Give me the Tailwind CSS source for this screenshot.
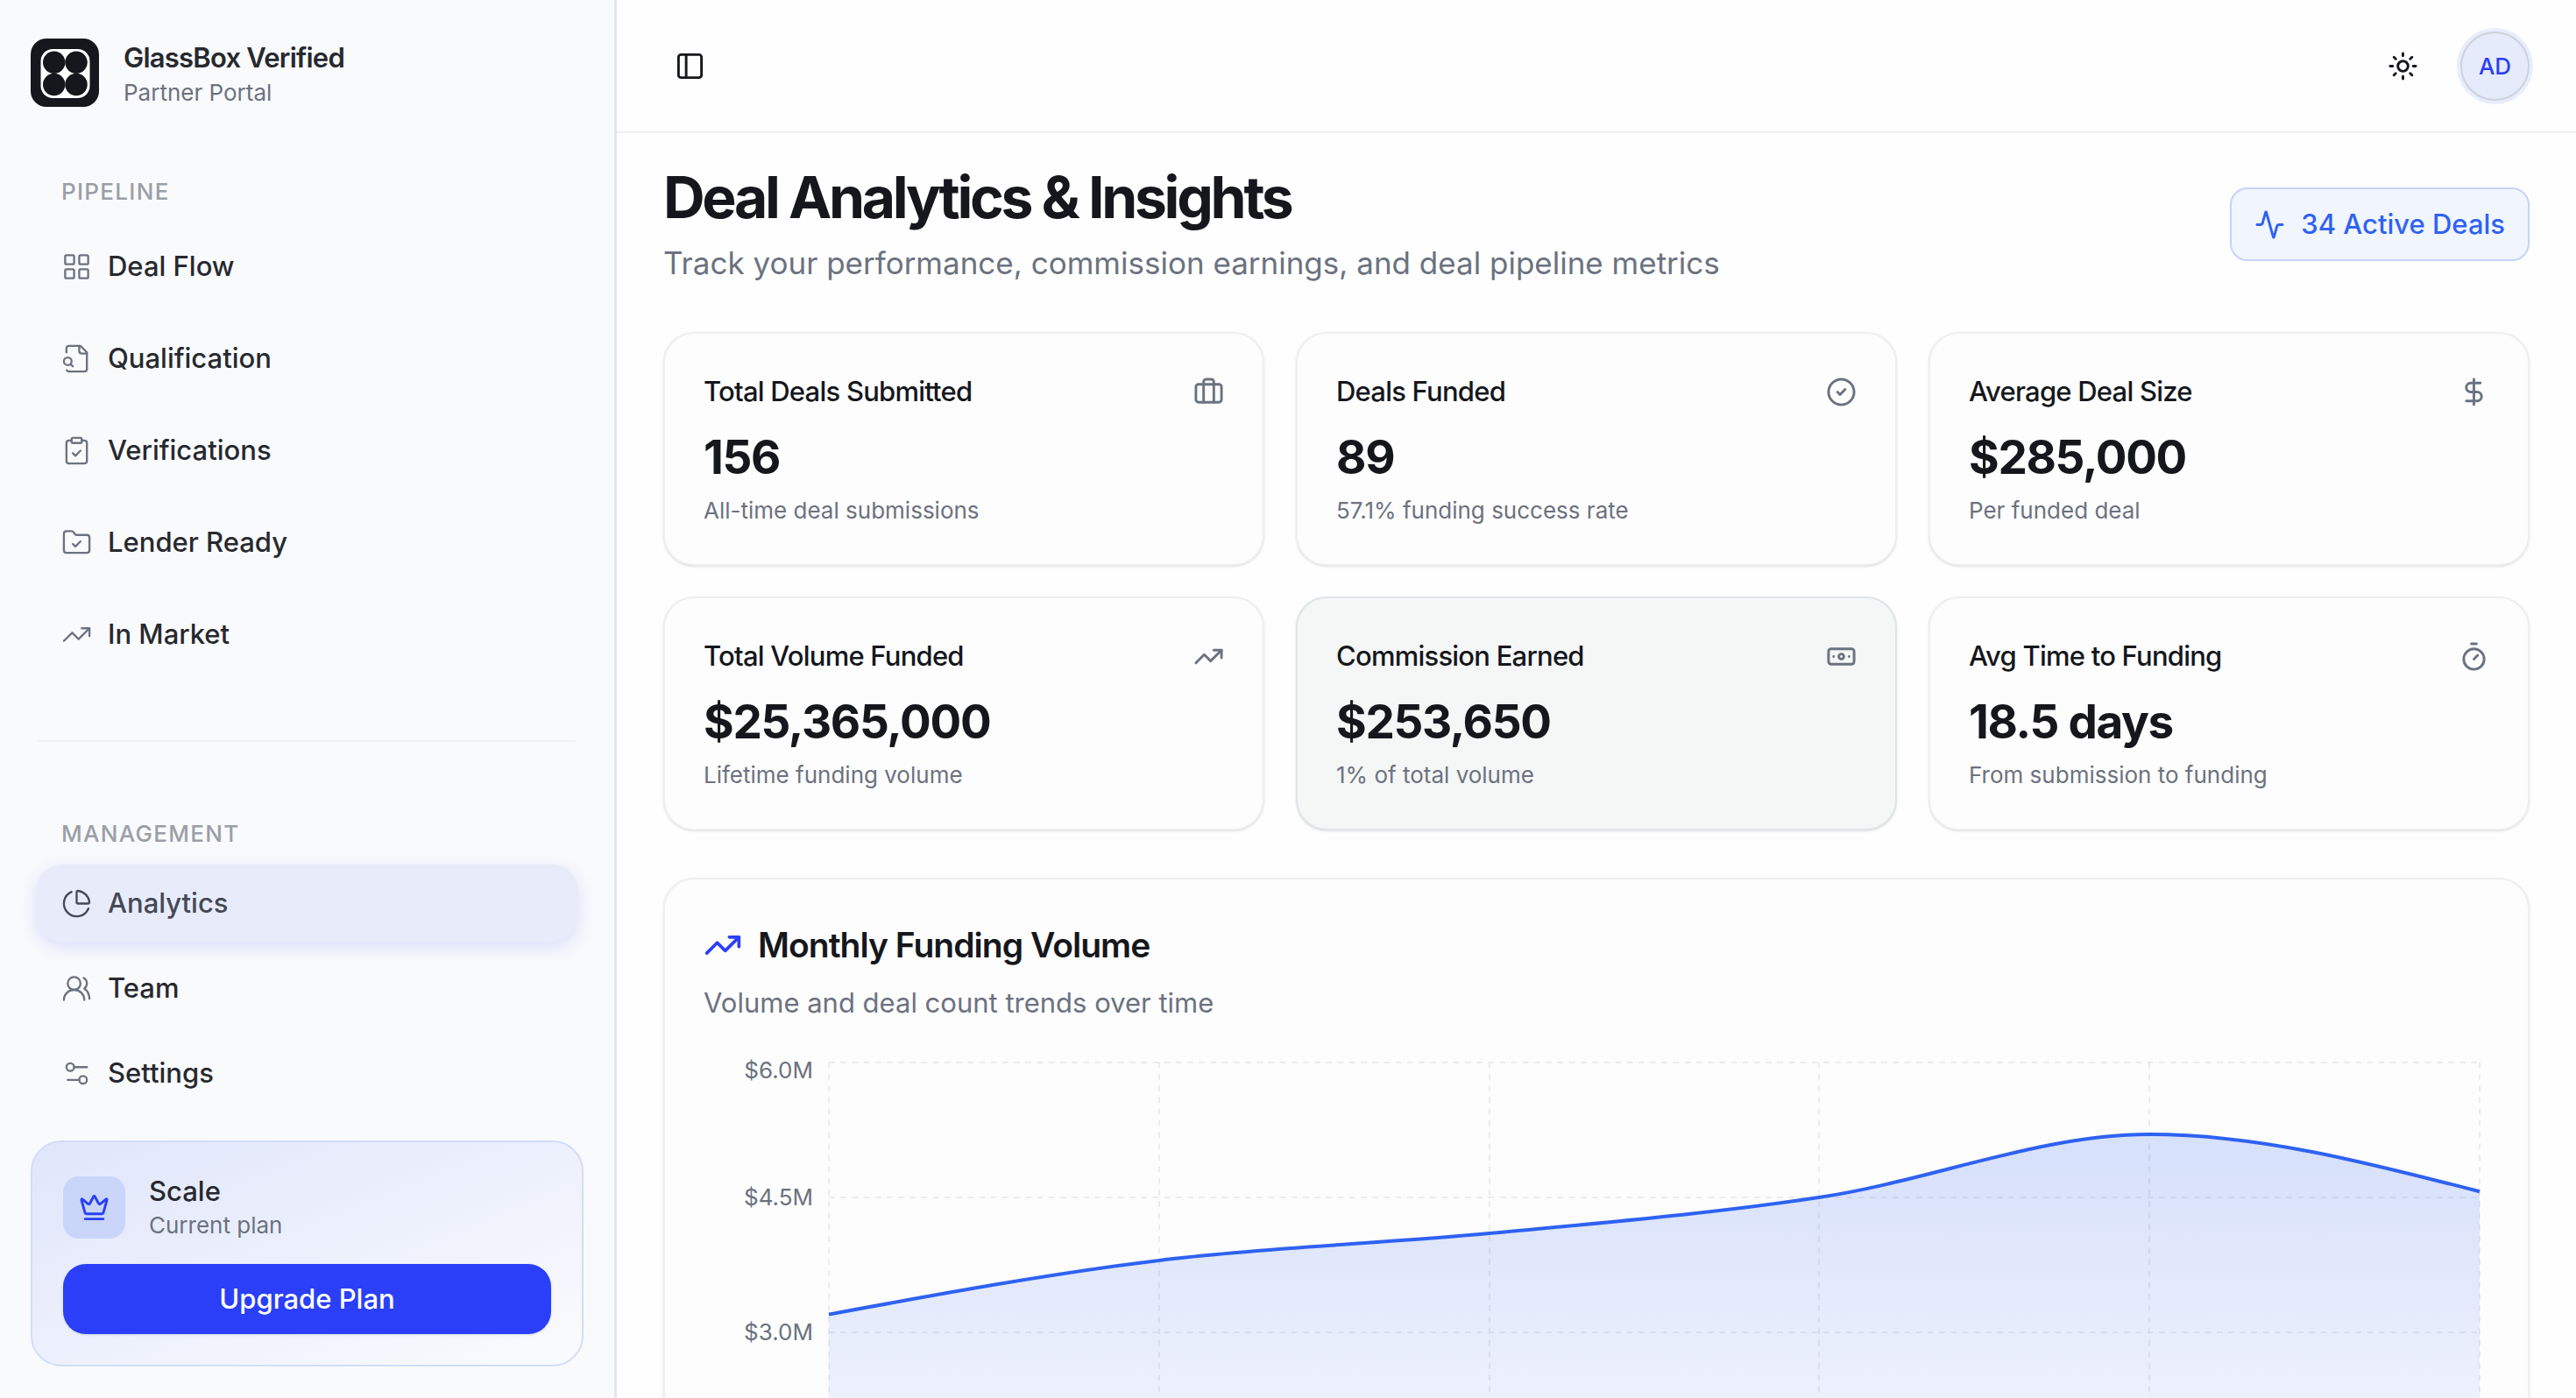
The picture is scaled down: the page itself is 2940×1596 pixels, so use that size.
<!DOCTYPE html>
<html lang="en">
<head>
    <meta charset="UTF-8">
    <meta name="viewport" content="width=device-width, initial-scale=1.0">
    <title>Deal Analytics - GlassBox Verified</title>
    <script src="https://cdn.jsdelivr.net/npm/@tailwindcss/browser@4"></script>
</head>
<body class="bg-[#fefefe] font-[Inter,sans-serif] text-[#15171c] antialiased">
    <!-- icons -->
    <svg class="hidden" aria-hidden="true">
        <symbol id="trending" viewBox="0 0 24 24"><path d="m22 7-8.500 8.500-5-5L2 17"/><path d="M16 7h6v6"/></symbol>
    </svg>

    <div class="flex h-screen overflow-hidden">
    <!-- sidebar -->
    <aside class="flex w-[704px] shrink-0 flex-col border-r-3 border-[#e2e5ea] bg-[#f9fafc] px-[35px] pb-9 text-[31px] leading-[44px] text-[#27292f]">
        <div class="flex h-[122px] items-center gap-7 pt-11">
            <svg class="size-[78px]" viewBox="0 0 78 78">
                <rect width="78" height="78" rx="18" fill="#15171c"/>
                <rect x="11.500" y="12" width="56" height="56" rx="14" fill="#fff"/>
                <g fill="#15171c"><circle cx="26.700" cy="27.300" r="12.700"/><circle cx="52" cy="27.300" r="12.700"/><circle cx="26.700" cy="52.500" r="12.700"/><circle cx="52" cy="52.500" r="12.700"/></g>
            </svg>
            <div class="pt-1">
                <p class="font-semibold leading-[42px] tracking-tight">GlassBox Verified</p>
                <p class="text-[26px] leading-[38px] text-[#6b7280]">Partner Portal</p>
            </div>
        </div>

        <nav class="mt-[70px]">
            <h2 class="px-[35px] text-[26px] leading-[54px] font-medium tracking-wider text-[#9a9fa7]">PIPELINE</h2>
            <ul class="mt-[14px] flex flex-col gap-[17px] px-[6px]">
                <li><a href="#" class="flex h-[88px] items-center gap-[18px] px-[29px] font-medium">
                    <svg class="size-[35px] fill-none stroke-[#6b7280] stroke-[1.6]" stroke-linecap="round" stroke-linejoin="round" viewBox="0 0 24 24"><rect x="3" y="3" width="7" height="7" rx="1"/><rect x="14" y="3" width="7" height="7" rx="1"/><rect x="14" y="14" width="7" height="7" rx="1"/><rect x="3" y="14" width="7" height="7" rx="1"/></svg>
                    Deal Flow</a></li>
                <li><a href="#" class="flex h-[88px] items-center gap-[18px] px-[29px] font-medium">
                    <svg class="size-[35px] fill-none stroke-[#6b7280] stroke-[1.6]" stroke-linecap="round" stroke-linejoin="round" viewBox="0 0 24 24"><path d="M14 2v4a2 2 0 0 0 2 2h4"/><path d="M4.268 21a2 2 0 0 0 1.727 1H18a2 2 0 0 0 2-2V7l-5-5H6a2 2 0 0 0-2 2v3"/><path d="m9 18-1.500-1.500"/><circle cx="5" cy="14" r="3"/></svg>
                    Qualification</a></li>
                <li><a href="#" class="flex h-[88px] items-center gap-[18px] px-[29px] font-medium">
                    <svg class="size-[35px] fill-none stroke-[#6b7280] stroke-[1.6]" stroke-linecap="round" stroke-linejoin="round" viewBox="0 0 24 24"><rect x="8" y="2" width="8" height="4" rx="1"/><path d="M16 4h2a2 2 0 0 1 2 2v14a2 2 0 0 1-2 2H6a2 2 0 0 1-2-2V6a2 2 0 0 1 2-2h2"/><path d="m9 14 2 2 4-4"/></svg>
                    Verifications</a></li>
                <li><a href="#" class="flex h-[88px] items-center gap-[18px] px-[29px] font-medium">
                    <svg class="size-[35px] fill-none stroke-[#6b7280] stroke-[1.6]" stroke-linecap="round" stroke-linejoin="round" viewBox="0 0 24 24"><path d="M20 20a2 2 0 0 0 2-2V8a2 2 0 0 0-2-2h-7.900a2 2 0 0 1-1.690-.9L9.600 3.900A2 2 0 0 0 7.930 3H4a2 2 0 0 0-2 2v13a2 2 0 0 0 2 2Z"/><path d="m9 13 2 2 4-4"/></svg>
                    Lender Ready</a></li>
                <li><a href="#" class="flex h-[88px] items-center gap-[18px] px-[29px] font-medium">
                    <svg class="size-[35px] fill-none stroke-[#6b7280] stroke-[1.6]" stroke-linecap="round" stroke-linejoin="round"><use href="#trending"/></svg>
                    In Market</a></li>
            </ul>
        </nav>

        <hr class="mx-[9px] mt-[77px] border-t-2 border-[#f0f1f3]">

        <nav class="mt-[78px]">
            <h2 class="px-[35px] text-[26px] leading-[54px] font-medium tracking-wider text-[#9a9fa7]">MANAGEMENT</h2>
            <ul class="mt-2 flex flex-col gap-[9px] px-[6px]">
                <li><a href="#" aria-current="page" class="flex h-[88px] items-center gap-[18px] rounded-[30px] bg-[#e8ecfa] px-[29px] font-medium text-[#454956] shadow-[0_6px_20px_#2a3ff726]">
                    <svg class="size-[35px] fill-none stroke-[#454956] stroke-[1.6]" stroke-linecap="round" stroke-linejoin="round" viewBox="0 0 24 24"><path d="M21 12c.552 0 1.005-.449.95-.998a10 10 0 0 0-8.953-8.951c-.55-.055-.998.398-.998.95v8a1 1 0 0 0 1 1z"/><path d="M21.210 15.890A10 10 0 1 1 8 2.830"/></svg>
                    Analytics</a></li>
                <li><a href="#" class="flex h-[88px] items-center gap-[18px] px-[29px] font-medium">
                    <svg class="size-[35px] fill-none stroke-[#6b7280] stroke-[1.6]" stroke-linecap="round" stroke-linejoin="round" viewBox="0 0 24 24"><path d="M18 21a8 8 0 0 0-16 0"/><circle cx="10" cy="8" r="5"/><path d="M22 20c0-3.370-2-6.500-4-8a5 5 0 0 0-.45-8.300"/></svg>
                    Team</a></li>
                <li><a href="#" class="flex h-[88px] items-center gap-[18px] px-[29px] font-medium">
                    <svg class="size-[35px] fill-none stroke-[#6b7280] stroke-[1.6]" stroke-linecap="round" stroke-linejoin="round" viewBox="0 0 24 24"><path d="M20 7H10"/><path d="M14 17H5"/><circle cx="17" cy="17" r="3"/><circle cx="7" cy="7" r="3"/></svg>
                    Settings</a></li>
            </ul>
        </nav>

        <!-- plan -->
        <div class="mt-auto rounded-[35px] border-2 border-[#d3dcfa] bg-linear-to-br from-[#e0e6fb] to-[#fafbfd] px-[35px] pt-[35px] pb-[35px]">
            <div class="flex items-center gap-[27px]">
                <div class="flex size-[71px] items-center justify-center rounded-[18px] bg-[#c9d6fa]">
                    <svg class="size-[35px] fill-none stroke-[#2a3ff7] stroke-2" stroke-linecap="round" stroke-linejoin="round" viewBox="0 0 24 24"><path d="M11.562 3.266a.5.5 0 0 1 .876 0L15.390 8.870a1 1 0 0 0 1.516.294L21.183 5.500a.5.5 0 0 1 .798.519l-2.834 10.246a1 1 0 0 1-.956.734H5.810a1 1 0 0 1-.957-.734L2.020 6.020a.5.5 0 0 1 .798-.519l4.276 3.664a1 1 0 0 0 1.516-.294z"/><path d="M5 21h14"/></svg>
                </div>
                <div>
                    <p class="leading-[42px] font-medium">Scale</p>
                    <p class="text-[26px] leading-9 text-[#6b7280]">Current plan</p>
                </div>
            </div>
            <button type="button" class="mt-[26px] h-20 w-full rounded-[26px] bg-[#2a3ff7] font-medium text-white shadow-sm">Upgrade Plan</button>
        </div>
    </aside>

    <div class="min-w-0 flex-1">
        <!-- header -->
        <header class="flex h-[152px] items-center justify-between border-b-2 border-[#f0f0f1] px-[53px]">
            <button type="button" aria-label="Toggle sidebar" class="ml-[-5px] flex size-[70px] items-center justify-center">
                <svg class="size-[35px] fill-none stroke-current stroke-2" stroke-linecap="round" stroke-linejoin="round" viewBox="0 0 24 24"><rect x="3" y="3" width="18" height="18" rx="2"/><path d="M9 3v18"/></svg>
            </button>
            <div class="flex items-center gap-[31px]">
                <button type="button" aria-label="Toggle theme" class="flex size-[70px] items-center justify-center">
                    <svg class="size-[35px] fill-none stroke-current stroke-2" stroke-linecap="round" stroke-linejoin="round" viewBox="0 0 24 24"><circle cx="12" cy="12" r="4"/><path d="M12 2v2M12 20v2M4.930 4.930l1.410 1.410M17.660 17.660l1.410 1.410M2 12h2M20 12h2M6.340 17.660l-1.410 1.410M19.070 4.930l-1.410 1.410"/></svg>
                </button>
                <button type="button" class="size-[79px] rounded-full border-2 border-[#cfd2db] bg-[#e6ebfc] text-[26px] font-medium text-[#2a3ff7] ring-4 ring-[#e8edfc]">AD</button>
            </div>
        </header>

        <main class="px-[53px]">
            <div class="flex items-start justify-between pt-[34px]">
                <div>
                    <h1 class="text-[66px] leading-[79px] font-bold tracking-tighter">Deal Analytics &amp; Insights</h1>
                    <p class="mt-[9px] text-[35px] leading-[53px] text-[#6b7280]">Track your performance, commission earnings, and deal pipeline metrics</p>
                </div>
                <div class="mt-7 flex h-[84px] items-center gap-[18px] rounded-[20px] border-2 border-[#c5d3fb] bg-[#f1f5fe] px-[26px] text-[31px] font-medium text-[#2f62f2]">
                    <svg class="size-[35px] fill-none stroke-current stroke-2" stroke-linecap="round" stroke-linejoin="round" viewBox="0 0 24 24"><path d="M22 12h-2.480a2 2 0 0 0-1.930 1.460l-2.350 8.360a.25.25 0 0 1-.48 0L9.240 2.180a.25.25 0 0 0-.48 0l-2.350 8.360A2 2 0 0 1 4.490 12H2"/></svg>
                    34 Active Deals
                </div>
            </div>

            <!-- stats -->
            <div class="mt-[52px] grid grid-cols-3 gap-x-9 gap-y-[35px]">
                <section class="rounded-[35px] border-2 border-[#eeefef] bg-[#fdfdfd] p-11 shadow-sm">
                    <div class="flex h-11 items-center justify-between">
                        <h3 class="text-[31px] font-medium tracking-tight">Total Deals Submitted</h3>
                        <svg class="size-[35px] fill-none stroke-[#6b7280] stroke-2" stroke-linecap="round" stroke-linejoin="round" viewBox="0 0 24 24"><path d="M16 20V4a2 2 0 0 0-2-2h-4a2 2 0 0 0-2 2v16"/><rect x="2" y="6" width="20" height="14" rx="2"/></svg>
                    </div>
                    <p class="mt-[18px] text-[53px] leading-[70px] font-bold tracking-tight">156</p>
                    <p class="mt-[9px] text-[26px] leading-[34px] text-[#6b7280]">All-time deal submissions</p>
                </section>
                <section class="rounded-[35px] border-2 border-[#eeefef] bg-[#fdfdfd] p-11 shadow-sm">
                    <div class="flex h-11 items-center justify-between">
                        <h3 class="text-[31px] font-medium tracking-tight">Deals Funded</h3>
                        <svg class="size-[35px] fill-none stroke-[#6b7280] stroke-2" stroke-linecap="round" stroke-linejoin="round" viewBox="0 0 24 24"><circle cx="12" cy="12" r="10"/><path d="m9 12 2 2 4-4"/></svg>
                    </div>
                    <p class="mt-[18px] text-[53px] leading-[70px] font-bold tracking-tight">89</p>
                    <p class="mt-[9px] text-[26px] leading-[34px] text-[#6b7280]">57.1% funding success rate</p>
                </section>
                <section class="rounded-[35px] border-2 border-[#eeefef] bg-[#fdfdfd] p-11 shadow-sm">
                    <div class="flex h-11 items-center justify-between">
                        <h3 class="text-[31px] font-medium tracking-tight">Average Deal Size</h3>
                        <svg class="size-[35px] fill-none stroke-[#6b7280] stroke-2" stroke-linecap="round" stroke-linejoin="round" viewBox="0 0 24 24"><path d="M12 2v20"/><path d="M17 5H9.500a3.500 3.500 0 0 0 0 7h5a3.500 3.500 0 0 1 0 7H6"/></svg>
                    </div>
                    <p class="mt-[18px] text-[53px] leading-[70px] font-bold tracking-tight">$285,000</p>
                    <p class="mt-[9px] text-[26px] leading-[34px] text-[#6b7280]">Per funded deal</p>
                </section>
                <section class="rounded-[35px] border-2 border-[#eeefef] bg-[#fdfdfd] p-11 shadow-sm">
                    <div class="flex h-11 items-center justify-between">
                        <h3 class="text-[31px] font-medium tracking-tight">Total Volume Funded</h3>
                        <svg class="size-[35px] fill-none stroke-[#6b7280] stroke-2" stroke-linecap="round" stroke-linejoin="round"><use href="#trending"/></svg>
                    </div>
                    <p class="mt-[18px] text-[53px] leading-[70px] font-bold tracking-tight">$25,365,000</p>
                    <p class="mt-[9px] text-[26px] leading-[34px] text-[#6b7280]">Lifetime funding volume</p>
                </section>
                <section class="rounded-[35px] border-2 border-[#e1e4e8] bg-[#f5f6f6] p-11 shadow-sm">
                    <div class="flex h-11 items-center justify-between">
                        <h3 class="text-[31px] font-medium tracking-tight">Commission Earned</h3>
                        <svg class="size-[35px] fill-none stroke-[#6b7280] stroke-2" stroke-linecap="round" stroke-linejoin="round" viewBox="0 0 24 24"><rect x="2" y="6" width="20" height="12" rx="2"/><circle cx="12" cy="12" r="2"/><path d="M6 12h.01M18 12h.01"/></svg>
                    </div>
                    <p class="mt-[18px] text-[53px] leading-[70px] font-bold tracking-tight">$253,650</p>
                    <p class="mt-[9px] text-[26px] leading-[34px] text-[#6b7280]">1% of total volume</p>
                </section>
                <section class="rounded-[35px] border-2 border-[#eeefef] bg-[#fdfdfd] p-11 shadow-sm">
                    <div class="flex h-11 items-center justify-between">
                        <h3 class="text-[31px] font-medium tracking-tight">Avg Time to Funding</h3>
                        <svg class="size-[35px] fill-none stroke-[#6b7280] stroke-2" stroke-linecap="round" stroke-linejoin="round" viewBox="0 0 24 24"><path d="M10 2h4"/><path d="m12 14 3-3"/><circle cx="12" cy="14" r="8"/></svg>
                    </div>
                    <p class="mt-[18px] text-[53px] leading-[70px] font-bold tracking-tight">18.5 days</p>
                    <p class="mt-[9px] text-[26px] leading-[34px] text-[#6b7280]">From submission to funding</p>
                </section>
            </div>

            <!-- chart -->
            <section class="mt-[54px] rounded-[35px] border-2 border-[#eeefef] bg-[#fdfdfd] p-11 shadow-sm">
                <h2 class="flex items-center gap-[18px] text-[39px] leading-[62px] font-semibold tracking-tight">
                    <svg class="size-11 fill-none stroke-[#2a3ff7] stroke-2" stroke-linecap="round" stroke-linejoin="round"><use href="#trending"/></svg>
                    Monthly Funding Volume
                </h2>
                <p class="mt-[13px] text-[31px] leading-[44px] text-[#6b7280]">Volume and deal count trends over time</p>
                <div class="mt-[46px] mr-[11px] flex gap-[18px]">
                    <div class="-mt-2 w-[125px] text-right text-[26px] leading-[34px] text-[#6b7280]">
                        <div class="h-[145px]">$6.0M</div>
                        <div class="h-[154px]">$4.5M</div>
                        <div class="h-[154px]">$3.0M</div>
                    </div>
                    <svg class="h-[616px] min-w-0 flex-1 overflow-visible fill-none" viewBox="0 0 1884 616" preserveAspectRatio="none">
                        <defs>
                            <linearGradient id="volume" x1="0" y1="0" x2="0" y2="1">
                                <stop offset="5%" stop-color="#2f62f2" stop-opacity=".18"/>
                                <stop offset="95%" stop-color="#2f62f2" stop-opacity="0"/>
                            </linearGradient>
                        </defs>
                        <g stroke="#ececed" stroke-width="2" stroke-dasharray="6.600 6.600">
                            <path d="M0 0H1884M0 154H1884M0 308H1884M0 462H1884M0 616H1884"/>
                            <path d="M0 0V616M377 0V616M754 0V616M1130 0V616M1507 0V616M1884 0V616"/>
                        </g>
                        <path fill="url(#volume)" d="M0 287.500C126 264.400 251 241.300 377 225.900C502 210.500 628 207.100 754 195.100C879 183.100 1005 172.800 1130 154C1256 135.200 1382 82.100 1507 82.100C1633 82.100 1758 114.700 1884 147.300V616H0Z"/>
                        <path stroke="#2f62f2" stroke-width="4" d="M0 287.500C126 264.400 251 241.300 377 225.900C502 210.500 628 207.100 754 195.100C879 183.100 1005 172.800 1130 154C1256 135.200 1382 82.100 1507 82.100C1633 82.100 1758 114.700 1884 147.300"/>
                    </svg>
                </div>
            </section>
        </main>
    </div>
    </div>
</body>
</html>
